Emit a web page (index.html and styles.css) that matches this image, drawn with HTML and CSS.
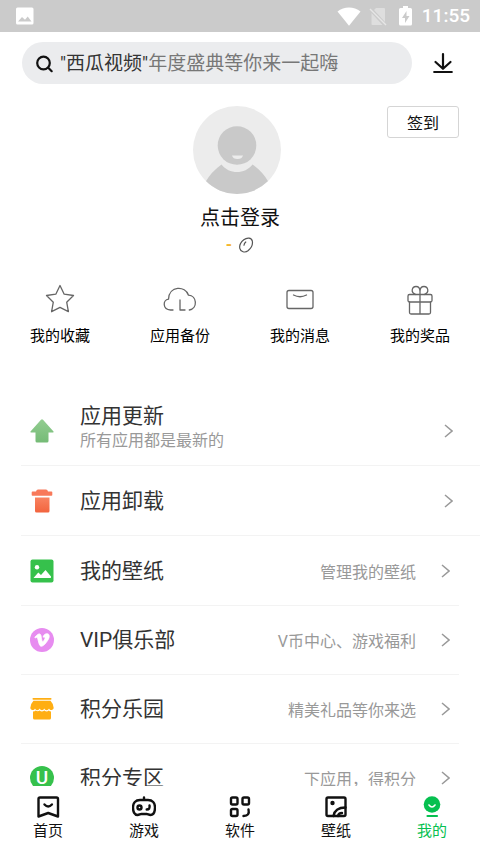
FILE: index.html
```html
<!DOCTYPE html>
<html lang="zh-CN">
<head>
<meta charset="utf-8">
<meta name="viewport" content="width=device-width, initial-scale=1">
<title>我的</title>
<link rel="stylesheet" href="styles.css">
</head>
<body>
<div class="status">
  <svg class="status-photo" width="18" height="18" viewBox="0 0 18 18"><path fill="#fff" fill-rule="evenodd" d="M1.500 0.500h14.500a1.500 1.500 0 0 1 1.500 1.500v14a1.500 1.500 0 0 1-1.500 1.500h-14.500a1.500 1.500 0 0 1-1.500-1.500v-14a1.500 1.500 0 0 1 1.500-1.500zM2 14.500h13.500l-3.800-5-2.700 3.200-3-2.700z"/></svg>
  <svg width="24" height="19" viewBox="0 0 24 19"><path fill="#fff" d="M0.500 4.500C7-1 17-1 23.500 4.500L12 18.700z"/></svg>
  <svg class="status-sim" width="18" height="19" viewBox="0 0 18 19"><path fill="#dedede" d="M7 1h8q1 0 1 1v13L5 3zM2.500 6L13.500 18h-10q-1 0-1-1z"/><path stroke="#e6e6e6" stroke-width="1.500" d="M1 2l16 16"/></svg>
  <svg class="status-battery" width="13" height="20" viewBox="0 0 13 20"><path fill="#fff" fill-rule="evenodd" d="M4 0h5v2h2.500q1.500 0 1.500 1.500v14.500q0 1.500-1.500 1.500h-10Q0 19.500 0 18V3.500Q0 2 1.500 2H4zM7.500 5L3 12h3v5l4.500-7h-3z"/></svg>
  <time class="clock">11:55</time>
</div>

<header class="top">
  <label class="search">
    <svg width="18" height="18" viewBox="0 0 18 18" fill="none" stroke="#111" stroke-width="2.200" stroke-linecap="round"><circle cx="7.500" cy="8" r="6.300"/><path d="M12.500 13l3.200 3.200"/></svg>
    <span class="search-topic">"西瓜视频"</span>
    <input class="search-input" type="text" placeholder="年度盛典等你来一起嗨" aria-label="搜索">
  </label>
  <button class="download" type="button" aria-label="下载管理">
    <svg width="22" height="22" viewBox="0 0 22 22" fill="none" stroke="#111" stroke-width="2.200" stroke-linecap="round" stroke-linejoin="round"><path d="M11 2v14.500M3.500 10l7.500 6.800 7.500-6.800M2.200 20h17.600"/></svg>
  </button>
</header>

<main class="content">
  <section class="profile">
    <a class="login" href="#login">
      <svg class="avatar" width="88" height="88" viewBox="0 0 88 88"><defs><clipPath id="avatar"><circle cx="44" cy="44" r="44"/></clipPath></defs><circle cx="44" cy="44" r="44" fill="#ececec"/><g clip-path="url(#avatar)"><path fill="#c9c9c9" d="M12.500 76Q18 66 28.500 58.500C36 68.500 52 68.500 59.500 58.500Q70 66 75.500 76L60 88H28z"/></g><circle cx="44" cy="39.500" r="19.300" fill="#c9c9c9"/><path fill="#ececec" d="M39 49.500h11q-1 3.500-5.500 3.500T39 49.500z"/></svg>
      <span class="login-text">点击登录</span>
    </a>
    <div class="beans">
      <span class="beans-count">-</span>
      <svg width="16" height="16" viewBox="0 0 16 16" fill="none" stroke="#555" stroke-width="1.200"><path d="M5.800 2.800C9 .2 13.500.5 14.300 4c.7 3.500-1.500 7.500-4.300 9.800-3 2.300-7.500 1-8.200-2.500C1.200 8.300 3.300 4.800 5.800 2.800z"/><path stroke-linecap="round" d="M6 8.200q.2-2 1.800-3.200"/></svg>
    </div>
    <button class="checkin" type="button">签到</button>
  </section>

  <nav class="quick" aria-label="快捷入口">
    <a href="#favorites"><svg viewBox="0 0 34 34"><path d="M17 3.500l4.200 8.700 9.300 1.300-6.800 6.700 1.700 9.500-8.400-4.300-8.400 4.300 1.700-9.500-6.800-6.700 9.300-1.300z"/></svg><span>我的收藏</span></a>
    <a href="#backup"><svg viewBox="0 0 34 34"><path d="M10 28H7.500C-.5 27.500-.5 18 5.500 17.200 6 3.500 22.500 3.500 25.500 13.200c8.500.3 9.500 13.300.8 14.800M17 18v10h5"/></svg><span>应用备份</span></a>
    <a href="#messages"><svg viewBox="0 0 34 34"><rect x="4" y="8.500" width="26" height="18" rx="2"/><path d="M10.500 13q6.500 3.500 13 0"/></svg><span>我的消息</span></a>
    <a href="#prizes"><svg viewBox="0 0 34 34"><rect x="5" y="12.500" width="24" height="7.500" rx="1.500"/><path d="M6.500 20v10.500q0 1.500 1.500 1.500h18q1.500 0 1.500-1.500V20M17 12.500V32M12.800 12.500C7 10.500 9 4.500 13 4.500q4 0 4 5v3M21.200 12.500c5.800-2 3.800-8-.2-8q-4 0-4 5"/></svg><span>我的奖品</span></a>
  </nav>

  <ul class="menu">
    <li class="wide"><a href="#updates">
      <svg class="icon" viewBox="0 0 24 24"><defs><linearGradient id="up" x2="0" y2="1"><stop stop-color="#93cd91"/><stop offset="1" stop-color="#75bb76"/></linearGradient></defs><path fill="url(#up)" d="M11 .800q1-1.100 2 0L23.500 12.500q.5 1-.5 1h-4.500v8.500q0 1.500-1.500 1.500H7q-1.500 0-1.500-1.500v-8.500H1q-1 0-.5-1z"/></svg>
      <span class="title">应用更新<small>所有应用都是最新的</small></span>
      <svg class="chevron" viewBox="0 0 9 14"><path d="M1 1l7 6-7 6"/></svg></a></li>
    <li class="wide"><a href="#uninstall">
      <svg class="icon" viewBox="0 0 24 24"><defs><linearGradient id="bin" x2="0" y2="1"><stop stop-color="#f98361"/><stop offset="1" stop-color="#f2643e"/></linearGradient></defs><path fill="#f8795a" d="M8 .500h8q1.500 0 2 2h3.500q.8 0 .8.800V6q0 .7-.8.700h-19q-.8 0-.8-.700V3.300q0-.8.800-.8H6q.500-2 2-2z"/><path fill="url(#bin)" d="M5 8.500h14.500V22q0 1.500-1.500 1.500H6.500Q5 23.500 5 22z"/></svg>
      <span class="title">应用卸载</span>
      <svg class="chevron" viewBox="0 0 9 14"><path d="M1 1l7 6-7 6"/></svg></a></li>
    <li><a href="#wallpapers">
      <svg class="icon" viewBox="0 0 24 24"><rect x=".5" y=".5" width="23" height="23" rx="2" fill="#36c14c"/><circle cx="7" cy="8.300" r="2.200" fill="#fff"/><path fill="#fff" d="M3.500 19l4.800-5.500 2.700 2.500 4.500-5 5.500 6.500q.5 1.500-1 1.500z"/></svg>
      <span class="title">我的壁纸</span><span class="value">管理我的壁纸</span>
      <svg class="chevron" viewBox="0 0 9 14"><path d="M1 1l7 6-7 6"/></svg></a></li>
    <li><a href="#vip">
      <svg class="icon" viewBox="0 0 24 24"><circle cx="12" cy="12" r="12" fill="#e78cf0"/><path transform="translate(4.800 4.800) scale(.6)" fill="#fff" stroke="#fff" stroke-width="1.400" stroke-linejoin="round" d="M23.976 6.417c-.105 2.338-1.739 5.543-4.894 9.609-3.268 4.247-6.026 6.370-8.290 6.370-1.409 0-2.578-1.294-3.553-3.881l-1.918-7.114c-.719-2.584-1.488-3.878-2.312-3.878-.179 0-.806.378-1.881 1.132L0 7.195a315 315 0 0 0 3.501-3.128c1.579-1.368 2.765-2.085 3.554-2.159 1.867-.18 3.016 1.100 3.447 3.836.475 2.953.8 4.789.978 5.508.539 2.446 1.133 3.667 1.783 3.667.502 0 1.260-.796 2.265-2.385 1.004-1.589 1.540-2.797 1.612-3.628.144-1.371-.395-2.061-1.614-2.061-.574 0-1.167.121-1.777.391 1.186-3.868 3.434-5.757 6.762-5.637 2.473.06 3.628 1.664 3.493 4.797z"/></svg>
      <span class="title">VIP俱乐部</span><span class="value">V币中心、游戏福利</span>
      <svg class="chevron" viewBox="0 0 9 14"><path d="M1 1l7 6-7 6"/></svg></a></li>
    <li><a href="#points">
      <svg class="icon" viewBox="0 0 24 24" fill="#ffae13"><rect x="2.500" y="1" width="19" height="1.800" rx=".8"/><path d="M3.500 3.800h17q3 3 3.200 7.200c-.8 2.500-3.700 2.700-4.700.5-1 2.200-3.800 2.200-4.700 0-1 2.200-3.700 2.200-4.600 0-1 2.200-3.800 2.200-4.700 0C4 13.700 1 13.500.3 11q.2-4.200 3.200-7.200z"/><path d="M3 14.500q2 0 2.700-1 2 1.500 4 0 2 1.800 4.600 0 2.500 1.800 4.500 0 .7 1 2.200 1v6.500q0 1.500-1.500 1.500h-15Q3 22.500 3 21z"/></svg>
      <span class="title">积分乐园</span><span class="value">精美礼品等你来选</span>
      <svg class="chevron" viewBox="0 0 9 14"><path d="M1 1l7 6-7 6"/></svg></a></li>
    <li><a href="#zone">
      <span class="icon badge">U</span>
      <span class="title">积分专区</span><span class="value">下应用，得积分</span>
      <svg class="chevron" viewBox="0 0 9 14"><path d="M1 1l7 6-7 6"/></svg></a></li>
  </ul>
</main>

<nav class="tabs" aria-label="主导航">
  <a href="#home"><svg viewBox="0 0 24 24"><path d="M2.500 4q0-1.500 1.500-1.500h16.500q1.500 0 1.500 1.500v17.500L12.200 18 2.500 21.500z"/><path d="M8.500 9.500q3.700 4 7.400 0"/></svg><span>首页</span></a>
  <a href="#games"><svg viewBox="0 0 24 24"><path d="M12 2.500V5M8 5h8c4.500 0 7 3 7 7.300 0 4.700-1.500 7.700-4.500 7.700-1.800 0-2.500-1-3.800-1H9.300C8 19 7.300 20 5.500 20 2.500 20 1 17 1 12.300 1 8 3.500 5 8 5z"/><circle cx="7.500" cy="12.500" r="2"/><path d="M17.500 10.500q.8 4-2.800 4"/></svg><span>游戏</span></a>
  <a href="#apps"><svg viewBox="0 0 24 24"><rect x="3" y="2.500" width="6.500" height="7" rx="1.500"/><rect x="14.500" y="2.500" width="6.500" height="7" rx="1.500"/><rect x="3" y="14" width="6.500" height="7" rx="1.500"/><path d="M20.500 14.500q1.500 6.500-5 6.500"/></svg><span>软件</span></a>
  <a href="#walls"><svg viewBox="0 0 24 24"><rect x="2.500" y="2.500" width="19" height="18.500" rx="1.500"/><path d="M9.500 21c1-6 5-8.500 12-8.500M14 21q.5-3 4-3"/><circle cx="8.500" cy="8" r="1" fill="currentColor"/></svg><span>壁纸</span></a>
  <a class="active" href="#me" aria-current="page"><svg viewBox="0 0 24 24"><circle cx="12" cy="9.500" r="8.300" fill="currentColor" stroke="none"/><path stroke="#fff" stroke-width="1.600" d="M9 10q3 4 6 0"/><path stroke-width="2.200" d="M7.500 21h9.500"/></svg><span>我的</span></a>
</nav>
</body>
</html>
```
FILE: styles.css
```css
* { box-sizing: border-box; }

body {
  margin: 0;
  height: 100vh;
  display: flex;
  flex-direction: column;
  overflow: hidden;
  background: #fff;
  color: #111;
  font-family: Roboto, "Noto Sans CJK SC", sans-serif;
  font-size: 16px;
}

svg { display: block; flex: none; }
a { color: inherit; text-decoration: none; }
button, input { font: inherit; color: inherit; border: 0; padding: 0; background: none; }

.status {
  flex: none;
  display: flex;
  align-items: center;
  height: 32px;
  padding: 0 10px 0 16px;
  background: #cbcbcb;
  color: #fff;
}
.status-photo { margin-right: auto; }
.status-sim { margin-left: 8px; }
.status-battery { margin: 0 10px 0 12px; }
.clock { font-size: 19px; font-weight: 500; line-height: 32px; }

.top {
  flex: none;
  display: flex;
  align-items: center;
  gap: 20px;
  padding: 10px 26px 0 22px;
}
.search {
  flex: 1;
  min-width: 0;
  display: flex;
  align-items: baseline;
  height: 42px;
  padding: 2px 14px 0;
  border-radius: 21px;
  background: #ebecee;
  font-size: 19px;
  line-height: 40px;
}
.search svg { align-self: center; }
.search-topic { margin-left: 6px; flex: none; color: #333; }
.search-input { flex: 1; min-width: 0; height: 40px; outline: 0; }
.search-input::placeholder { color: #777; opacity: 1; }

.content { flex: 1; min-height: 0; overflow: hidden; }

.profile {
  display: grid;
  grid-template-columns: 1fr auto 1fr;
  padding: 22px 21px 0;
}
.login {
  grid-column: 2;
  display: flex;
  flex-direction: column;
  align-items: center;
}
.avatar { margin-right: 6px; }
.login-text { margin-top: 9px; font-size: 20px; line-height: 30px; }
.beans {
  grid-column: 2;
  grid-row: 2;
  display: flex;
  justify-content: center;
  align-items: center;
  gap: 6px;
  height: 23px;
}
.beans-count { color: #f5b52c; font-weight: 700; line-height: 20px; }
.checkin {
  grid-column: 3;
  grid-row: 1;
  justify-self: end;
  width: 72px;
  height: 32px;
  border: 1px solid #d5d5d5;
  border-radius: 3px;
}

.quick {
  display: grid;
  grid-template-columns: repeat(4, 1fr);
  padding-top: 26px;
  font-size: 15px;
  line-height: 22px;
  color: #000;
}
.quick a { display: flex; flex-direction: column; align-items: center; gap: 9px; }
.quick svg { width: 34px; height: 34px; fill: none; stroke: #666; stroke-width: 1.3; stroke-linejoin: round; stroke-linecap: round; }

.menu { list-style: none; margin: 49px 0 0; padding: 0 0 0 21px; }
.menu li { margin-right: 21px; border-bottom: 1px solid #f3f3f3; }
.menu a { display: flex; align-items: center; height: 68px; padding: 0 9px; }
.menu .wide { margin-right: 0; }
.menu .wide a,
.menu .wide + li a { height: 69px; }
.menu .wide a { padding-right: 27px; }
.icon { width: 24px; height: 24px; }
.title { flex: 1; margin-left: 26px; font-size: 21px; line-height: 28px; color: #333; }
.title small { display: block; padding-bottom: 8px; font-size: 16px; line-height: 22px; color: #999; }
.value { color: #999; }
.chevron { width: 9px; height: 14px; margin-left: 25px; fill: none; stroke: #999; stroke-width: 1.5; }
.badge {
  border-radius: 50%;
  background: #36c14c;
  color: #fff;
  font-size: 19px;
  font-weight: 500;
  line-height: 24px;
  text-align: center;
}

.tabs {
  flex: none;
  display: grid;
  grid-template-columns: repeat(5, 1fr);
  height: 67px;
  padding-top: 9px;
  background: #fff;
  font-size: 15px;
  line-height: 22px;
}
.tabs a { display: flex; flex-direction: column; align-items: center; gap: 1px; }
.tabs svg { width: 24px; height: 24px; fill: none; stroke: currentColor; stroke-width: 2.4; stroke-linejoin: round; stroke-linecap: round; }
.tabs .active { color: #06c050; }
```
